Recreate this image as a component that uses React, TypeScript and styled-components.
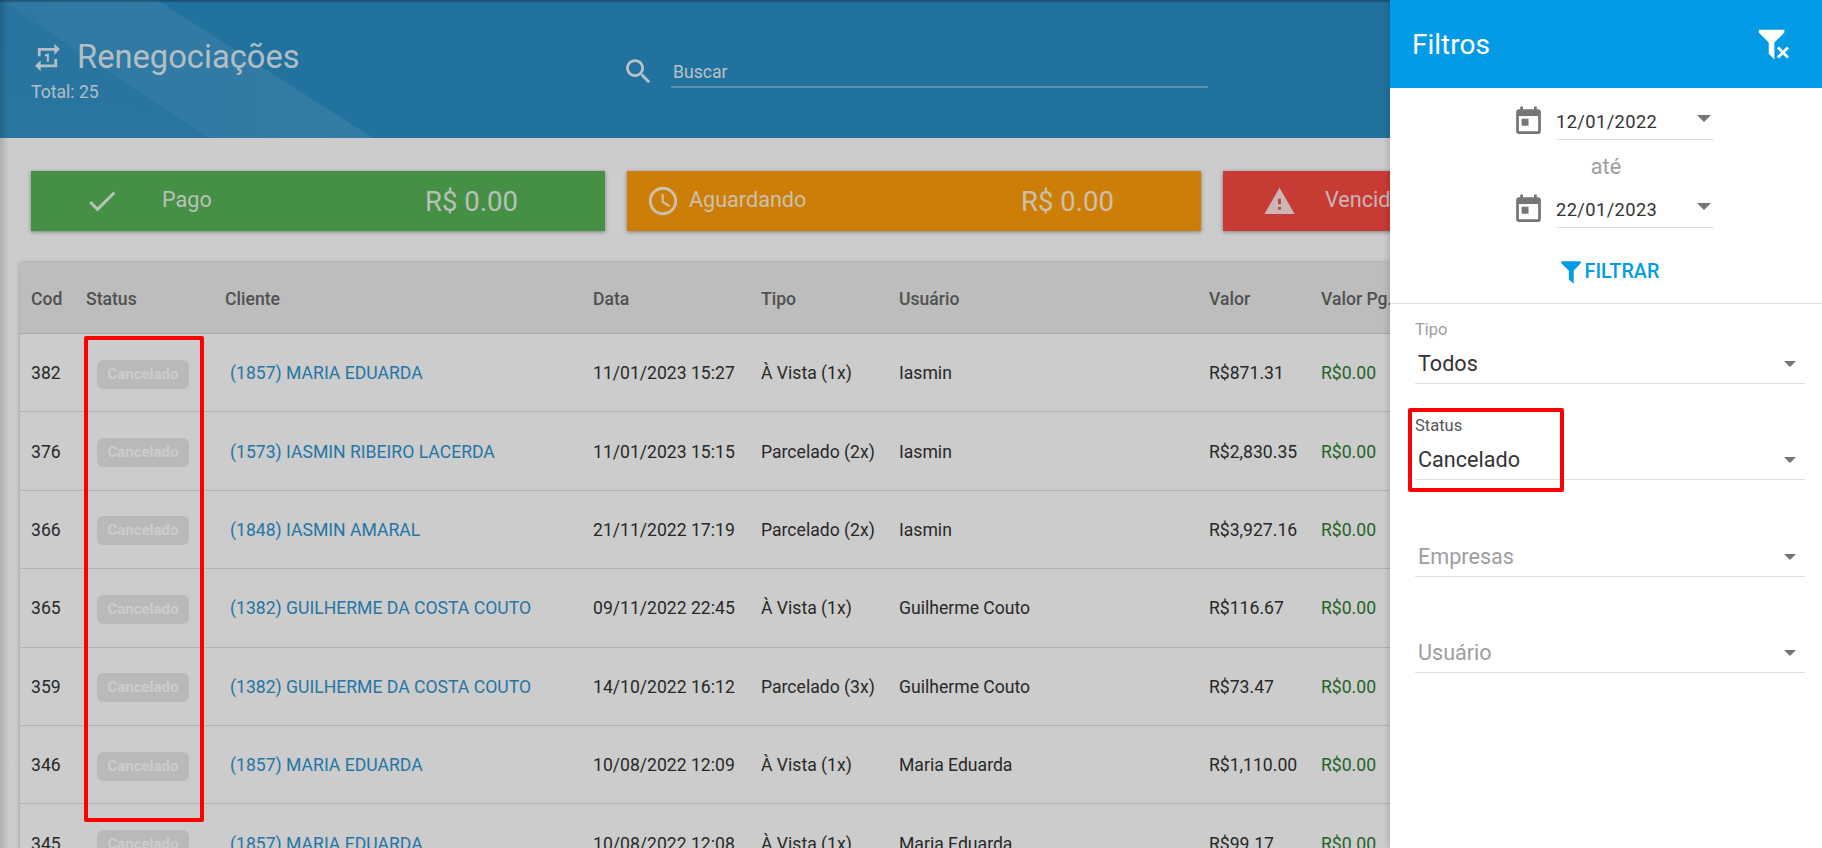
import React from 'react'
import styled, { createGlobalStyle } from 'styled-components'

const GlobalStyle = createGlobalStyle`
  html, body {
    margin: 0;
    padding: 0;
    height: 100%;
    overflow: hidden;
    background: #fff;
    font-family: Roboto, "Liberation Sans", sans-serif;
  }
  * {
    box-sizing: border-box;
  }
`

const ICONS = {
  repeatOne: 'M7 7h10v3l4-4-4-4v3H5v6h2V7zm10 10H7v-3l-4 4 4 4v-3h12v-6h-2v4zm-4-2V9h-1l-2 1v1h1.5v4H13z',
  search: 'M15.5 14h-.79l-.28-.27C15.41 12.59 16 11.11 16 9.5 16 5.91 13.09 3 9.5 3S3 5.91 3 9.5 5.91 16 9.5 16c1.61 0 3.09-.59 4.23-1.57l.27.28v.79l5 4.99L20.49 19l-4.99-5zm-6 0C7.01 14 5 11.99 5 9.5S7.01 5 9.5 5 14 7.01 14 9.5 11.99 14 9.5 14z',
  check: 'M9 16.17L4.83 12l-1.42 1.41L9 19 21 7l-1.41-1.41z',
  clock: 'M11.99 2C6.47 2 2 6.48 2 12s4.47 10 9.99 10C17.52 22 22 17.52 22 12S17.52 2 11.99 2zM12 20c-4.42 0-8-3.58-8-8s3.58-8 8-8 8 3.58 8 8-3.58 8-8 8zm.5-13H11v6l5.25 3.15.75-1.23-4.5-2.67z',
  warning: 'M1 21h22L12 2 1 21zm12-3h-2v-2h2v2zm0-4h-2v-4h2v4z',
  today: 'M19 3h-1V1h-2v2H8V1H6v2H5c-1.11 0-1.99.9-1.99 2L3 19c0 1.1.89 2 2 2h14c1.1 0 2-.9 2-2V5c0-1.1-.9-2-2-2zm0 16H5V8h14v11zM7 10h5v5H7z',
  filter: 'M3 2h18v2h-.08L14.5 10.92v12L10 18.91v-8L3.09 4H3V2z',
  filterRemove: 'M14.76 20.83L17.6 18l-2.84-2.83 1.41-1.41L19 16.57l2.83-2.81 1.41 1.41L20.43 18l2.81 2.83-1.41 1.41L19 19.4l-2.83 2.84-1.41-1.41zM2 2h18v2h-.08L13 10.92v12l-4-4v-8L2.09 4H2V2z',
}

function Icon({ d, size, color, className }: { d: string; size: number; color: string; className?: string }) {
  return (
    <svg className={className} width={size} height={size} viewBox="0 0 24 24" fill={color} style={{ display: 'block', flex: 'none' }}>
      <path d={d} />
    </svg>
  )
}

const COLUMNS = '55px 139px 368px 168px 138px 310px 112px 1fr'

const ROWS = [
  { cod: '382', cliente: '(1857) MARIA EDUARDA', data: '11/01/2023 15:27', tipo: 'À Vista (1x)', usuario: 'Iasmin', valor: 'R$871.31' },
  { cod: '376', cliente: '(1573) IASMIN RIBEIRO LACERDA', data: '11/01/2023 15:15', tipo: 'Parcelado (2x)', usuario: 'Iasmin', valor: 'R$2,830.35' },
  { cod: '366', cliente: '(1848) IASMIN AMARAL', data: '21/11/2022 17:19', tipo: 'Parcelado (2x)', usuario: 'Iasmin', valor: 'R$3,927.16' },
  { cod: '365', cliente: '(1382) GUILHERME DA COSTA COUTO', data: '09/11/2022 22:45', tipo: 'À Vista (1x)', usuario: 'Guilherme Couto', valor: 'R$116.67' },
  { cod: '359', cliente: '(1382) GUILHERME DA COSTA COUTO', data: '14/10/2022 16:12', tipo: 'Parcelado (3x)', usuario: 'Guilherme Couto', valor: 'R$73.47' },
  { cod: '346', cliente: '(1857) MARIA EDUARDA', data: '10/08/2022 12:09', tipo: 'À Vista (1x)', usuario: 'Maria Eduarda', valor: 'R$1,110.00' },
  { cod: '345', cliente: '(1857) MARIA EDUARDA', data: '10/08/2022 12:08', tipo: 'À Vista (1x)', usuario: 'Maria Eduarda', valor: 'R$99.17' },
]

export default function App() {
  return (
    <Page>
      <GlobalStyle />
      <Header>
        <TitleBlock>
          <TitleRow>
            <Icon d={ICONS.repeatOne} size={33} color="rgba(255,255,255,.85)" />
            <Title>Renegociações</Title>
          </TitleRow>
          <Total>Total: 25</Total>
        </TitleBlock>
        <SearchBlock>
          <Icon d={ICONS.search} size={33} color="rgba(255,255,255,.9)" />
          <SearchField>Buscar</SearchField>
        </SearchBlock>
      </Header>

      <Cards>
        <Card $color="#57b557" $columns="131px 263px 1fr">
          <CardIcon $offset={53}><Icon d={ICONS.check} size={36} color="rgba(255,255,255,.85)" /></CardIcon>
          <CardLabel>Pago</CardLabel>
          <CardValue>R$ 0.00</CardValue>
        </Card>
        <Card $color="#ff9e08" $columns="62px 332px 1fr">
          <CardIcon $offset={19}><Icon d={ICONS.clock} size={34} color="rgba(255,255,255,.85)" /></CardIcon>
          <CardLabel>Aguardando</CardLabel>
          <CardValue>R$ 0.00</CardValue>
        </Card>
        <Card $color="#f84b43" $columns="102px 332px 1fr">
          <CardIcon $offset={40}><Icon d={ICONS.warning} size={33} color="rgba(255,255,255,.85)" /></CardIcon>
          <CardLabel>Vencido</CardLabel>
          <CardValue>R$ 0.00</CardValue>
        </Card>
      </Cards>

      <Table>
        <HeadRow>
          <span>Cod</span>
          <span>Status</span>
          <span>Cliente</span>
          <span>Data</span>
          <span>Tipo</span>
          <span>Usuário</span>
          <span>Valor</span>
          <span>Valor Pg.</span>
        </HeadRow>
        {ROWS.map(row => (
          <BodyRow key={row.cod}>
            <span>{row.cod}</span>
            <span><Chip>Cancelado</Chip></span>
            <ClientLink>{row.cliente}</ClientLink>
            <span>{row.data}</span>
            <span>{row.tipo}</span>
            <span>{row.usuario}</span>
            <span>{row.valor}</span>
            <PaidValue>R$0.00</PaidValue>
          </BodyRow>
        ))}
      </Table>

      <Scrim />
      <StatusColumnMark />

      <Drawer>
        <DrawerHeader>
          <DrawerTitle>Filtros</DrawerTitle>
          <Icon d={ICONS.filterRemove} size={34} color="#fff" />
        </DrawerHeader>

        <DatesSection>
          <DateRow>
            <Icon d={ICONS.today} size={33} color="#757575" />
            <DateField>12/01/2022<Arrow /></DateField>
          </DateRow>
          <DateSeparator>até</DateSeparator>
          <DateRow>
            <Icon d={ICONS.today} size={33} color="#757575" />
            <DateField>22/01/2023<Arrow /></DateField>
          </DateRow>
          <FilterButton>
            <Icon d={ICONS.filter} size={26} color="#039be5" />
            FILTRAR
          </FilterButton>
        </DatesSection>

        <SelectsSection>
          <SelectField>
            <SelectLabel>Tipo</SelectLabel>
            <SelectValue>Todos<SelectArrow /></SelectValue>
          </SelectField>
          <SelectField>
            <SelectLabel $focused>Status</SelectLabel>
            <SelectValue>Cancelado<SelectArrow /></SelectValue>
          </SelectField>
          <SelectField>
            <SelectLabel />
            <SelectValue $empty>Empresas<SelectArrow /></SelectValue>
          </SelectField>
          <SelectField>
            <SelectLabel />
            <SelectValue $empty>Usuário<SelectArrow /></SelectValue>
          </SelectField>
          <StatusFieldMark />
        </SelectsSection>
      </Drawer>
    </Page>
  )
}

const Page = styled.div`
  position: relative;
  width: 100%;
  height: 100vh;
  overflow: hidden;
  background: #fff;
`

const Header = styled.header`
  position: relative;
  display: flex;
  height: 138px;
  padding-left: 31px;
  overflow: hidden;
  background: #2a8fc7;

  &::before {
    content: '';
    position: absolute;
    inset: 0;
    background: linear-gradient(to right, rgba(255, 255, 255, 0.075), rgba(255, 255, 255, 0.105) 370px);
    clip-path: polygon(0 0, 157px 0, 373px 138px, 210px 138px);
  }

  &::after {
    content: '';
    position: absolute;
    inset: 0;
    background: linear-gradient(to top right, rgba(255, 255, 255, 0.05), rgba(255, 255, 255, 0.02) 180px);
    clip-path: polygon(0 0, 210px 138px, 0 138px);
  }
`

const TitleBlock = styled.div`
  position: relative;
  width: 591px;
  padding-top: 37px;
`

const TitleRow = styled.div`
  display: flex;
  align-items: center;
  gap: 13px;
  height: 40px;
`

const Title = styled.h1`
  margin: 0;
  font-size: 32.7px;
  font-weight: 400;
  color: rgba(255, 255, 255, 0.85);
`

const Total = styled.div`
  margin-top: 5px;
  font-size: 17.6px;
  color: rgba(255, 255, 255, 0.85);
`

const SearchBlock = styled.div`
  position: relative;
  display: flex;
  align-items: center;
  gap: 16px;
  height: 33px;
  margin-top: 55px;
`

const SearchField = styled.div`
  width: 537px;
  height: 33px;
  padding: 7px 2px 0;
  font-size: 17.6px;
  color: rgba(255, 255, 255, 0.9);
  border-bottom: 2px solid rgba(255, 255, 255, 0.35);
`

const Cards = styled.section`
  display: flex;
  gap: 22px;
  margin-top: 33px;
  padding-left: 31px;
`

const Card = styled.div<{ $color: string; $columns: string }>`
  display: grid;
  grid-template-columns: ${p => p.$columns};
  align-items: center;
  flex: none;
  width: 574px;
  height: 60px;
  background: ${p => p.$color};
  box-shadow: 0 1px 4px rgba(0, 0, 0, 0.4);
`

const CardIcon = styled.div<{ $offset: number }>`
  margin-left: ${p => p.$offset}px;
`

const CardLabel = styled.div`
  margin-top: -3px;
  font-size: 21.6px;
  color: rgba(255, 255, 255, 0.85);
`

const CardValue = styled.div`
  font-size: 27.5px;
  font-weight: 400;
  color: rgba(255, 255, 255, 0.85);
`

const Table = styled.section`
  margin: 32px 20px 0;
  border-radius: 3px 3px 0 0;
  box-shadow: 0 0 5px rgba(0, 0, 0, 0.25);
`

const HeadRow = styled.div`
  display: grid;
  grid-template-columns: ${COLUMNS};
  align-items: center;
  height: 71px;
  padding: 2px 0 0 11px;
  background: #ededed;
  font-size: 17.6px;
  font-weight: 500;
  color: #666;
  border-bottom: 1px solid #d0d0d0;
`

const BodyRow = styled.div`
  display: grid;
  grid-template-columns: ${COLUMNS};
  align-items: center;
  height: 78.4px;
  padding: 1px 0 0 11px;
  font-size: 17.6px;
  color: #333;
  border-bottom: 1px solid #e0e0e0;
`

const Chip = styled.span`
  display: block;
  width: 92px;
  height: 29px;
  margin: 2px 0 0 11px;
  border-radius: 6px;
  background: #e8e8e8;
  color: #fff;
  font-size: 15px;
  font-weight: 700;
  line-height: 29px;
  text-align: center;
`

const ClientLink = styled.a`
  padding-left: 5px;
  color: #2e94cf;
`

const PaidValue = styled.span`
  color: #2e7d32;
`

const Scrim = styled.div`
  position: absolute;
  inset: 0;
  background:
    linear-gradient(to bottom, rgba(0, 0, 0, 0.35), transparent 3px),
    linear-gradient(to right, rgba(0, 0, 0, 0.14), transparent 9px),
    rgba(0, 0, 0, 0.2);
`

const StatusColumnMark = styled.div`
  position: absolute;
  left: 84px;
  top: 336px;
  width: 120px;
  height: 486px;
  border: 4px solid #f00;
  border-radius: 2px;
`

const Drawer = styled.aside`
  position: absolute;
  top: 0;
  right: 0;
  bottom: 0;
  width: 432px;
  background: #fff;
  box-shadow: -2px 0 6px rgba(0, 0, 0, 0.15);
`

const DrawerHeader = styled.div`
  display: flex;
  align-items: center;
  justify-content: space-between;
  height: 88px;
  padding: 0 32px 0 22px;
  background: #039be5;
`

const DrawerTitle = styled.h2`
  margin: 0;
  font-size: 28px;
  font-weight: 400;
  color: #fff;
`

const DatesSection = styled.div`
  display: flex;
  flex-direction: column;
  align-items: center;
  height: 216px;
  padding-top: 16px;
  border-bottom: 1px solid #e0e0e0;

  svg {
    margin-top: 1px;
  }
`

const DateRow = styled.div`
  display: flex;
  align-items: flex-start;
  gap: 11px;
  height: 36px;
  margin-left: 14px;
`

const DateField = styled.div`
  position: relative;
  width: 158px;
  height: 36px;
  line-height: 36px;
  font-size: 18.3px;
  color: #333;
  letter-spacing: 0.4px;
  border-bottom: 1px solid #e0e0e0;
`

const Arrow = styled.i`
  position: absolute;
  right: 3px;
  top: 11px;
  width: 0;
  height: 0;
  border-left: 7px solid transparent;
  border-right: 7px solid transparent;
  border-top: 7px solid #757575;
`

const SelectArrow = styled(Arrow)`
  right: 9px;
  top: 33px;
  border-left-width: 6px;
  border-right-width: 6px;
  border-top-width: 6px;
`

const DateSeparator = styled.div`
  height: 52px;
  padding-top: 1px;
  line-height: 52px;
  font-size: 21.6px;
  color: #9e9e9e;
`

const FilterButton = styled.div`
  display: flex;
  align-items: center;
  gap: 1px;
  margin: 30px 0 0 5px;
  font-size: 19.8px;
  font-weight: 500;
  color: #039be5;
`

const SelectsSection = styled.div`
  position: relative;
  padding: 0 17px 0 25px;
`

const SelectField = styled.div`
  height: 96.3px;
`

const SelectLabel = styled.div<{ $focused?: boolean }>`
  height: 24px;
  padding-top: 18px;
  line-height: 16px;
  font-size: 16.5px;
  color: ${p => (p.$focused ? '#555' : '#9e9e9e')};
`

const SelectValue = styled.div<{ $empty?: boolean }>`
  position: relative;
  height: 56px;
  padding: 21px 0 0 3px;
  line-height: 30px;
  font-size: 21.6px;
  color: ${p => (p.$empty ? '#9e9e9e' : '#333')};
  border-bottom: 1px solid #e0e0e0;
`

const StatusFieldMark = styled.div`
  position: absolute;
  left: 18px;
  top: 104px;
  width: 156px;
  height: 84px;
  border: 4px solid #f00;
  border-radius: 2px;
`
